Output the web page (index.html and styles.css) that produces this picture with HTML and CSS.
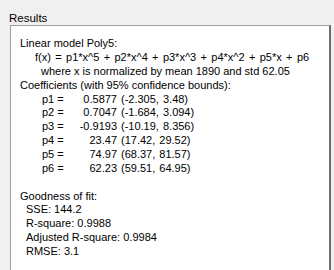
FILE: index.html
```html
<!DOCTYPE html>
<html lang="en">
<head>
    <meta charset="UTF-8">
    <title>Results</title>
    <link rel="stylesheet" href="styles.css">
</head>
<body>
    <div class="panel">
        <div class="panel-title">Results</div>

        <!-- Fit results listing -->
        <div class="results-box">
            <div class="line">Linear model Poly5:</div>
            <div class="line indent-eq">f(x) = p1*x^5 + p2*x^4 + p3*x^3 + p4*x^2 + p5*x + p6</div>
            <div class="line indent-where">where x is normalized by mean 1890 and std 62.05</div>
            <div class="line">Coefficients (with 95% confidence bounds):</div>

            <div class="coef-table">
                <span class="coef-name">p1 =</span><span class="coef-value">0.5877</span><span class="coef-bounds">(-2.305, 3.48)</span>
                <span class="coef-name">p2 =</span><span class="coef-value">0.7047</span><span class="coef-bounds">(-1.684, 3.094)</span>
                <span class="coef-name">p3 =</span><span class="coef-value">-0.9193</span><span class="coef-bounds">(-10.19, 8.356)</span>
                <span class="coef-name">p4 =</span><span class="coef-value">23.47</span><span class="coef-bounds">(17.42, 29.52)</span>
                <span class="coef-name">p5 =</span><span class="coef-value">74.97</span><span class="coef-bounds">(68.37, 81.57)</span>
                <span class="coef-name">p6 =</span><span class="coef-value">62.23</span><span class="coef-bounds">(59.51, 64.95)</span>
            </div>

            <div class="line blank"></div>
            <div class="line">Goodness of fit:</div>
            <div class="line indent-stat">SSE: 144.2</div>
            <div class="line indent-stat">R-square: 0.9988</div>
            <div class="line indent-stat">Adjusted R-square: 0.9984</div>
            <div class="line indent-stat">RMSE: 3.1</div>
        </div>
    </div>
</body>
</html>
```

FILE: styles.css
```css
body {
    margin: 0;
    background-color: #f0f0f0;
    font-family: "Liberation Sans", Arial, sans-serif;
    font-size: 11px;
    color: #000;
    height: 270px;
    overflow: hidden;
}
.panel {
    padding: 12px 0 0 9px;
}
.panel-title {
    line-height: 13px;
    font-size: 11.5px;
}
.results-box {
    box-sizing: border-box;
    margin: 0 3px 0 1px;
    height: 245px;
    background-color: #fff;
    border: 1px solid #a0a0a0;
    border-right: 2px solid #6d6d6d;
    border-bottom: none;
    padding: 11px 0 0 9px;
    line-height: 13.87px;
    white-space: nowrap;
    overflow: hidden;
}
.indent-eq {
    padding-left: 15px;
    word-spacing: 1.3px;
}
.indent-where {
    padding-left: 21px;
}
.indent-stat {
    padding-left: 6px;
}
.blank {
    height: 13.87px;
}
.coef-table {
    display: grid;
    grid-template-columns: 36px 39px auto;
    padding-left: 22px;
}
.coef-value {
    text-align: right;
}
.coef-bounds {
    padding-left: 4px;
    word-spacing: 1px;
}
```
